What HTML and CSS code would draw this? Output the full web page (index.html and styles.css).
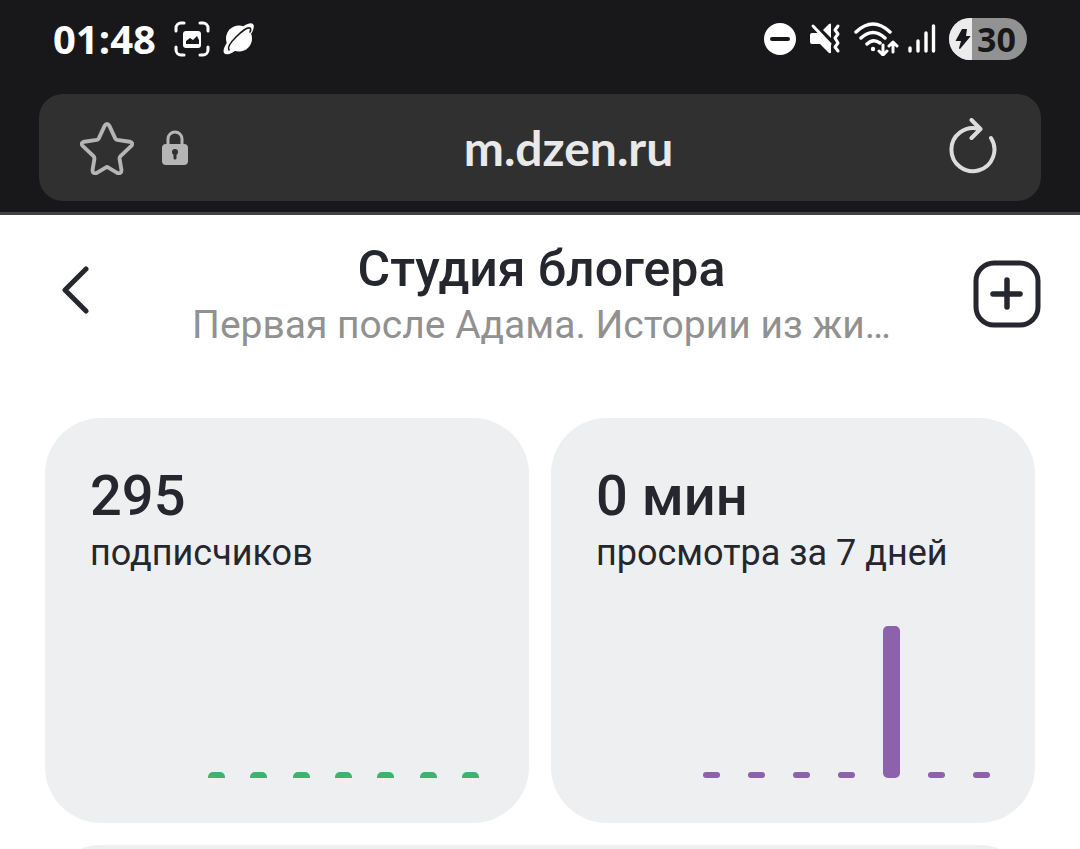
FILE: index.html
```html
<!DOCTYPE html>
<html lang="ru">
<head>
  <meta charset="UTF-8">
  <meta name="viewport" content="width=device-width, initial-scale=1">
  <title>Студия блогера</title>
  <link rel="stylesheet" href="styles.css">
</head>
<body>

  <div class="browser">
    <div class="status-bar">
      <div class="status-left">
        <span class="clock">01:48</span>
        <svg class="icon-shot" width="36" height="36" viewBox="0 0 36 36" fill="none">
          <path d="M2 10V7a5 5 0 0 1 5-5h3M26 2h3a5 5 0 0 1 5 5v3M34 26v3a5 5 0 0 1-5 5h-3M10 34H7a5 5 0 0 1-5-5v-3" stroke="#fff" stroke-width="3" stroke-linecap="round"/>
          <rect x="9" y="10" width="18" height="17" rx="3" fill="#fff"/>
          <path d="M12 23v-3l4-3 3 2 4-4 2 4v4z" fill="#18181a"/>
        </svg>
        <svg class="icon-planet" width="32" height="32" viewBox="0 0 32 32" fill="none">
          <circle cx="16" cy="15.500" r="13" fill="#fff"/>
          <ellipse cx="15.700" cy="15.800" rx="20.500" ry="7" transform="rotate(-46 15.700 15.800)" fill="#fff"/>
          <path d="M6 27C4 24 8 19 13 14S24 4 27 5c1 1 1 2 0 4" stroke="#18181a" stroke-width="1.600" stroke-linecap="round"/>
        </svg>
      </div>
      <div class="status-right">
        <svg width="33" height="33" viewBox="0 0 33 33">
          <circle cx="16" cy="16" r="16" fill="#fff"/>
          <path d="M8 16h16" stroke="#18181a" stroke-width="4" stroke-linecap="round"/>
        </svg>
        <svg class="icon-mute" width="32" height="32" viewBox="0 0 32 32" fill="none">
          <path d="M0 12q0-2 2-2h7l12 11v8q0 2-2 1l-9-9H2q-2 0-2-2z" fill="#fff"/>
          <path d="M13 7l6-6q2-1 2 0v14z" fill="#fff"/>
          <path d="M3 3l17 18" stroke="#fff" stroke-width="3" stroke-linecap="round"/>
          <path d="M28 3l-3 4 3 4-3 4 3 5-3 4 3 4" stroke="#fff" stroke-width="3" stroke-linecap="round" stroke-linejoin="round"/>
        </svg>
        <svg class="icon-wifi" width="46" height="34" viewBox="0 0 46 34" fill="none" stroke="#fff" stroke-width="3" stroke-linecap="round" stroke-linejoin="round">
          <path d="M2 10q17-16 34 0M7 16q12-11 24 0M13 22q6-6 13-1" stroke-width="3.500"/>
          <circle cx="19" cy="27" r="2.200" fill="#fff" stroke="none"/>
          <path d="M29 23v9M25 29l4 4 4-4M39 30V20M35 24l4-4 4 4"/>
        </svg>
        <svg class="icon-signal" width="28" height="30" viewBox="0 0 28 30" stroke="#fff" stroke-width="3.400" stroke-linecap="round">
          <path d="M2 24v3M10 17v10M18 9v18M25.500 2v25"/>
        </svg>
        <div class="battery">
          <div class="battery-level">
            <svg width="16" height="22" viewBox="0 0 16 22"><path d="M7 1h5l-1 7h4q1 0 0 1L5 21q-1 0-1-1l2-7H1q-1 0 0-1z" fill="#18181a"/></svg>
          </div>
          <span>30</span>
        </div>
      </div>
    </div>

    <form class="address-bar">
      <button type="button" class="icon-btn" aria-label="Закладка">
        <svg width="54" height="54" viewBox="0 0 56 56" fill="none">
          <path d="M25.500 5q2.500-4 5 0l6 13q.500 1 2 1.500l13 2q4 1 2 4L42 36.500q-1 1-1 2.500l2 12q0 4-4 3l-10-6q-1-.500-2 0l-10 6q-4 1-4-3l2-12q0-1.500-1-2.500L2.500 25.500q-2-3 2-4l13-2q1.500-.500 2-1.500z" stroke="#b5b5b5" stroke-width="4" stroke-linejoin="round"/>
        </svg>
      </button>
      <svg class="icon-lock" width="26" height="36" viewBox="0 0 26 36" fill="none">
        <path d="M6 15V9a7 7 0 0 1 14 0v6" stroke="#b5b5b5" stroke-width="3"/>
        <rect y="14" width="26" height="21" rx="4" fill="#b5b5b5"/>
        <circle cx="13" cy="22" r="3" fill="#303030"/>
        <path d="M13 23v5" stroke="#303030" stroke-width="3" stroke-linecap="round"/>
      </svg>
      <input class="address" type="text" value="m.dzen.ru" aria-label="Адрес">
      <button type="button" class="icon-btn" aria-label="Обновить">
        <svg width="48" height="60" viewBox="0 0 48 60" fill="none" stroke="#dcdcdc" stroke-width="4" stroke-linecap="round" stroke-linejoin="round">
          <path d="M42 20A21.500 21.500 0 1 1 30 11M22.500 2l9 9-9 9"/>
        </svg>
      </button>
    </form>
  </div>

  <header class="header">
    <button type="button" class="icon-btn back" aria-label="Назад">
      <svg width="28" height="48" viewBox="0 0 28 48" fill="none" stroke="#26262e" stroke-width="5" stroke-linecap="round" stroke-linejoin="round">
        <path d="M24 3L3 24l21 21"/>
      </svg>
    </button>
    <div class="heading">
      <h1>Студия блогера</h1>
      <p>Первая после Адама. Истории из жи…</p>
    </div>
    <button type="button" class="icon-btn add" aria-label="Добавить">
      <svg width="68" height="68" viewBox="0 0 68 68" fill="none" stroke="#26262e" stroke-width="5" stroke-linecap="round">
        <rect x="3" y="3" width="62" height="62" rx="18"/>
        <path d="M20 34h27M34 20v27" stroke-width="5.500"/>
      </svg>
    </button>
  </header>

  <main class="cards">
    <section class="card">
      <h2>295</h2>
      <p>подписчиков</p>
      <div class="chart chart-green">
        <i></i><i></i><i></i><i></i><i></i><i></i><i></i>
      </div>
    </section>
    <section class="card">
      <h2>0 мин</h2>
      <p>просмотра за 7 дней</p>
      <div class="chart chart-purple">
        <i></i><i></i><i></i><i></i><i style="height: 152px"></i><i></i><i></i>
      </div>
    </section>
    <section class="card card-wide"></section>
  </main>

</body>
</html>
```
FILE: styles.css
```css
* {
  box-sizing: border-box;
}

body {
  margin: 0;
  height: 100vh;
  overflow: hidden;
  font-family: Roboto, sans-serif;
  background: #fff;
  color: #26262e;
}

h1, h2, p {
  margin: 0;
  font-weight: 400;
}

svg {
  display: block;
  flex-shrink: 0;
}

/* browser top */
.browser {
  padding: 0 39px 11px;
  background: #18181a;
  border-bottom: 3px solid #424144;
}

.status-bar {
  display: flex;
  align-items: center;
  justify-content: space-between;
  height: 78px;
  padding: 0 14px;
  margin-bottom: 16px;
}

.status-left, .status-right {
  display: flex;
  align-items: center;
}

.clock {
  font-family: "Open Sans", sans-serif;
  font-size: 40px;
  font-weight: 700;
  line-height: 48px;
  color: #fff;
}

.icon-shot {
  margin-left: 18px;
}

.icon-planet {
  margin-left: 13px;
  overflow: visible;
}

.icon-mute {
  margin-left: 13px;
}

.icon-wifi {
  margin-left: 12px;
}

.icon-signal {
  margin-left: 8px;
}

.battery {
  display: flex;
  align-items: center;
  width: 78px;
  height: 42px;
  margin-left: 13px;
  border-radius: 21px;
  background: #929292;
  color: #18181a;
  font-family: "Open Sans", sans-serif;
  font-size: 34px;
  font-weight: 700;
  line-height: 42px;
}

.battery-level {
  display: flex;
  align-items: center;
  justify-content: center;
  width: 23px;
  height: 42px;
  padding-left: 5px;
  margin-right: 5px;
  border-radius: 21px 0 0 21px;
  background: #ececec;
}

.address-bar {
  display: flex;
  align-items: center;
  height: 107px;
  padding: 0 44px 0 41px;
  border-radius: 24px;
  background: #303030;
}

.icon-btn {
  padding: 0;
  border: none;
  background: none;
  cursor: pointer;
}

.icon-lock {
  margin-left: 28px;
}

.address {
  flex: 1;
  min-width: 0;
  height: 60px;
  padding: 0;
  border: none;
  outline: none;
  background: none;
  color: #e9e9e9;
  font-family: Lato, sans-serif;
  font-size: 48px;
  font-weight: 700;
  text-align: center;
}

/* page header */
.header {
  display: flex;
  align-items: flex-start;
  justify-content: space-between;
  padding: 23px 39px 68px 62px;
}

.heading {
  flex: 1;
  min-width: 0;
  padding-left: 20px;
  text-align: center;
}

.heading h1 {
  font-size: 50px;
  font-weight: 500;
  line-height: 62px;
}

.heading p {
  overflow: hidden;
  color: #919191;
  font-size: 39px;
  line-height: 50px;
  white-space: nowrap;
}

.back {
  margin-top: 28px;
}

.add {
  margin-top: 22px;
}

/* stats */
.cards {
  display: grid;
  grid-template-columns: 1fr 1fr;
  gap: 22px;
  padding: 0 45px;
}

.card {
  display: flex;
  flex-direction: column;
  min-height: 405px;
  padding: 45px;
  border-radius: 56px;
  background: #edeff1;
}

.card-wide {
  grid-column: span 2;
}

.card h2 {
  font-size: 56px;
  font-weight: 500;
  line-height: 66px;
}

.card p {
  font-size: 36px;
  line-height: 48px;
}

.chart {
  display: flex;
  align-items: flex-end;
  justify-content: space-between;
  margin-top: auto;
}

.chart i {
  width: 17px;
  height: 6px;
}

.chart-green {
  padding: 0 5px 0 118px;
}

.chart-green i {
  border-radius: 5px 5px 0 0;
  background: #3cb371;
}

.chart-purple {
  padding-left: 107px;
}

.chart-purple i {
  border-radius: 5px;
  background: #8b62ab;
}
```
